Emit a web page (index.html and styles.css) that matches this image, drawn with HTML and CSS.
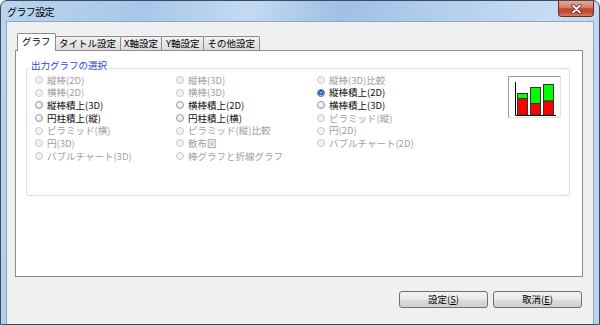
FILE: index.html
```html
<!DOCTYPE html>
<html lang="ja">
<head>
  <meta charset="UTF-8">
  <title>グラフ設定</title>
  <link rel="stylesheet" href="styles.css">
</head>
<body>

  <div class="window">
    <div class="titlebar">
      <span class="title">グラフ設定</span>
      <button class="close-btn" aria-label="閉じる">
        <svg width="11" height="10" viewBox="0 0 11 10">
          <path d="M2 1.5 L9 8.5 M9 1.5 L2 8.5" stroke="#5a2318" stroke-width="3.4" stroke-linecap="round"/>
          <path d="M2 1.5 L9 8.5 M9 1.5 L2 8.5" stroke="#ffffff" stroke-width="1.8" stroke-linecap="round"/>
        </svg>
      </button>
    </div>

    <div class="client">
      <div class="tabs">
        <div class="tab active">グラフ</div>
        <div class="tab">タイトル設定</div>
        <div class="tab">X軸設定</div>
        <div class="tab">Y軸設定</div>
        <div class="tab">その他設定</div>
      </div>

      <div class="tab-panel">
        <div class="group">
          <div class="group-title">出力グラフの選択</div>
          <div class="group-body">
            <div class="options">
              <!-- column 1 -->
              <label class="option disabled"><span class="radio"></span>縦棒(2D)</label>
              <label class="option disabled"><span class="radio"></span>横棒(2D)</label>
              <label class="option"><span class="radio"></span>縦棒積上(3D)</label>
              <label class="option"><span class="radio"></span>円柱積上(縦)</label>
              <label class="option disabled"><span class="radio"></span>ピラミッド(横)</label>
              <label class="option disabled"><span class="radio"></span>円(3D)</label>
              <label class="option disabled"><span class="radio"></span>バブルチャート(3D)</label>
              <!-- column 2 -->
              <label class="option disabled"><span class="radio"></span>縦棒(3D)</label>
              <label class="option disabled"><span class="radio"></span>横棒(3D)</label>
              <label class="option"><span class="radio"></span>横棒積上(2D)</label>
              <label class="option"><span class="radio"></span>円柱積上(横)</label>
              <label class="option disabled"><span class="radio"></span>ピラミッド(縦)比較</label>
              <label class="option disabled"><span class="radio"></span>散布図</label>
              <label class="option disabled"><span class="radio"></span>棒グラフと折線グラフ</label>
              <!-- column 3 -->
              <label class="option disabled"><span class="radio"></span>縦棒(3D)比較</label>
              <label class="option"><span class="radio checked"></span>縦棒積上(2D)</label>
              <label class="option"><span class="radio"></span>横棒積上(3D)</label>
              <label class="option disabled"><span class="radio"></span>ピラミッド(縦)</label>
              <label class="option disabled"><span class="radio"></span>円(2D)</label>
              <label class="option disabled"><span class="radio"></span>バブルチャート(2D)</label>
            </div>

            <svg class="chart-icon" width="53" height="42" viewBox="0 0 53 42">
              <rect x="0" y="0" width="53" height="42" fill="#ffffff"/>
              <path d="M0.5 42 V0.5 H53" fill="none" stroke="#9a9a9a"/>
              <path d="M52.5 0.5 V41.5 H0.5" fill="none" stroke="#e2e2e2"/>
              <!-- bars -->
              <rect x="9.5" y="17.5" width="10" height="5" fill="#00ff00" stroke="#333"/>
              <rect x="9.5" y="22.5" width="10" height="16.5" fill="#ff0000" stroke="#333"/>
              <rect x="22.5" y="11.5" width="10" height="16" fill="#00ff00" stroke="#333"/>
              <rect x="22.5" y="27.5" width="10" height="11.5" fill="#ff0000" stroke="#333"/>
              <rect x="35.5" y="8.5" width="10" height="16.5" fill="#00ff00" stroke="#333"/>
              <rect x="35.5" y="25" width="10" height="14" fill="#ff0000" stroke="#333"/>
              <!-- axes -->
              <path d="M7.5 6 V39.5 H48" fill="none" stroke="#000"/>
            </svg>
          </div>
        </div>
      </div>

      <div class="actions">
        <button class="btn">設定(<u>S</u>)</button>
        <button class="btn">取消(<u>E</u>)</button>
      </div>
    </div>
  </div>

</body>
</html>
```

FILE: styles.css
```css
body {
  margin: 0;
  font-family: "Noto Sans CJK JP", "Liberation Sans", sans-serif;
  font-size: 9.5px;
  color: #000;
  background-color: #ffffff;
}

.window {
  width: 600px;
  height: 325px;
  box-sizing: border-box;
  border: 1px solid #3b4c5e;
  border-radius: 7px 7px 0 0;
  overflow: hidden;
  background: linear-gradient(100deg, #bad4ee 0%, #a8c7e8 22%, #c3daf1 38%, #9fc0e4 52%, #b4cfec 68%, #c6dcf2 84%, #b9d3ee 100%);
}

.titlebar {
  height: 20px;
  display: flex;
  align-items: flex-start;
  padding-left: 6px;
}

.title {
  padding-top: 2px;
  line-height: 18px;
  font-size: 10px;
  letter-spacing: -0.6px;
  color: #000;
}

.close-btn {
  margin-left: auto;
  margin-right: 5px;
  width: 36px;
  height: 16px;
  padding: 0;
  border: 1px solid #6b2b20;
  border-top: none;
  border-radius: 0 0 4px 4px;
  background: linear-gradient(#e9a898 0%, #d77a64 45%, #c3442c 52%, #c5503a 78%, #dd7c5f 100%);
  display: flex;
  align-items: center;
  justify-content: center;
}

.client {
  height: 296px;
  margin: 0 5px 5px;
  border: 1px solid #8fa7c1;
  background-color: #f0f0f0;
  padding: 11px 10px 0 8px;
}

/* tabs */
.tabs {
  display: flex;
  align-items: flex-end;
  padding-left: 2px;
}

.tab {
  box-sizing: border-box;
  height: 14px;
  padding: 0 3.5px;
  margin-left: -1px;
  border: 1px solid #898c95;
  border-bottom: none;
  border-radius: 2px 2px 0 0;
  background: linear-gradient(#f3f3f3, #e6e6e6 50%, #dcdcdc);
  line-height: 13px;
  white-space: nowrap;
}

.tab.active {
  position: relative;
  z-index: 1;
  height: 18px;
  margin-left: 0;
  margin-bottom: -1px;
  padding: 0 4px;
  background: #ffffff;
  line-height: 15px;
}

.tab-panel {
  box-sizing: border-box;
  height: 227px;
  border: 1px solid #898c95;
  background-color: #ffffff;
  padding: 17px 12px 0 10px;
}

/* group box */
.group {
  box-sizing: border-box;
  height: 128px;
  border: 1px solid #d5dfe5;
  border-radius: 3px;
}

.group-title {
  display: table;
  margin: -9px 0 0 3px;
  padding: 0 1px;
  background-color: #ffffff;
  color: #2a3fdf;
  line-height: 10px;
}

.group-body {
  display: flex;
  align-items: flex-start;
  margin-top: 3.7px;
  padding-left: 8px;
}

.options {
  display: grid;
  grid-template-columns: repeat(3, 141px);
  grid-template-rows: repeat(7, 12.67px);
  grid-auto-flow: column;
}

.option {
  display: flex;
  align-items: center;
  white-space: nowrap;
  line-height: 12.67px;
  color: #111;
}

.option.disabled {
  color: #a0a0a0;
}

.radio {
  width: 8px;
  height: 8px;
  box-sizing: border-box;
  margin-right: 4px;
  border: 1px solid #979a9d;
  border-radius: 50%;
  background: radial-gradient(circle at 40% 35%, #ffffff, #d6d6d6);
  flex-shrink: 0;
}

.option.disabled .radio {
  border-color: #cacaca;
  background: #f2f2f2;
}

.radio.checked {
  border-color: #4d6f94;
  background: radial-gradient(circle at 50% 45%, #a6dcff 0, #2f86de 1.2px, #12458f 2.4px, #e4e4e4 2.9px);
}

.chart-icon {
  display: block;
  margin-left: auto;
  margin-right: 8px;
  margin-top: 2.3px;
}

/* buttons */
.actions {
  display: flex;
  justify-content: flex-end;
  gap: 5px;
  margin-top: 14px;
  padding-right: 1px;
}

.btn {
  width: 89px;
  height: 17px;
  padding: 0;
  border: 1px solid #707070;
  border-radius: 3px;
  background: linear-gradient(#f2f2f2 0%, #ebebeb 48%, #dddddd 52%, #cfcfcf 100%);
  font-family: inherit;
  font-size: 9.5px;
  line-height: 15px;
  color: #000;
}

.btn u {
  text-decoration: underline;
}
```
